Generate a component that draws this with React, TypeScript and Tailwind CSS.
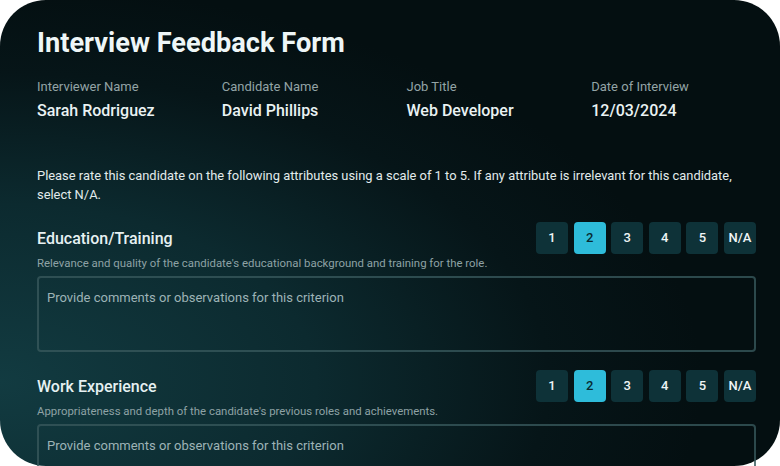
import React from "react";

const scores = ["1", "2", "3", "4", "5", "N/A"];

function Criterion({ title, desc }: { title: string; desc: string }) {
  return (
    <div className="flex flex-col">
      <div className="flex h-8 items-center justify-between">
        <h2 className="pt-[2px] text-[16px] font-medium leading-6 text-[#e6f1f2]">{title}</h2>
        <div className="flex gap-[5.6px]">
          {scores.map((s) => (
            <button
              key={s}
              className={
                s === "2"
                  ? "flex h-8 w-8 items-center justify-center rounded-[4px] bg-[#2ebcda] text-[13px] font-medium text-[#082a31]"
                  : "flex h-8 w-8 items-center justify-center rounded-[4px] bg-[#0e3238] text-[13px] font-medium text-[#eef5f6]"
              }
            >
              {s}
            </button>
          ))}
        </div>
      </div>
      <p className="mt-[1px] text-[11.4px] leading-4 text-[#8ea2a5]">{desc}</p>
      <div className="mt-[5px] h-[76px] rounded-[4px] border-2 border-[#37575b]/80 px-[8px] py-[10px] text-[13px] leading-5 text-[#9db3b6]">
        Provide comments or observations for this criterion
      </div>
    </div>
  );
}

export default function App() {
  return (
    <div className="h-[466px] w-[780px] overflow-hidden bg-white" style={{ fontFamily: "Roboto, 'Noto Sans', sans-serif" }}>
      <div className="h-full w-full rounded-[46px] bg-[radial-gradient(ellipse_90%_85%_at_0%_82%,#123b41_0%,#0c2a2f_45%,#061518_78%,#040f11_100%)] pl-[37px] pr-[24px] pt-[25px]">
        <h1 className="text-[27.2px] font-bold leading-9 text-[#eef6f7]">Interview Feedback Form</h1>
        <div className="mt-4 grid w-[719px] grid-cols-4 gap-x-5">
          {[
            ["Interviewer Name", "Sarah Rodriguez"],
            ["Candidate Name", "David Phillips"],
            ["Job Title", "Web Developer"],
            ["Date of Interview", "12/03/2024"],
          ].map(([l, v]) => (
            <div key={l} className="flex flex-col">
              <span className="text-[13px] leading-5 text-[#93a4a6]">{l}</span>
              <span className="mt-[2px] text-[16px] font-medium leading-6 text-[#eaf2f3]">{v}</span>
            </div>
          ))}
        </div>
        <p className="mt-[43px] w-[719px] text-[12.9px] leading-[19px] text-[#e2ebec]">
          Please rate this candidate on the following attributes using a scale of 1 to 5. If any attribute is irrelevant for this candidate, select N/A.
        </p>
        <div className="mt-[18px] flex w-[719px] flex-col gap-[18px]">
          <Criterion
            title="Education/Training"
            desc="Relevance and quality of the candidate's educational background and training for the role."
          />
          <Criterion
            title="Work Experience"
            desc="Appropriateness and depth of the candidate's previous roles and achievements."
          />
        </div>
      </div>
    </div>
  );
}
